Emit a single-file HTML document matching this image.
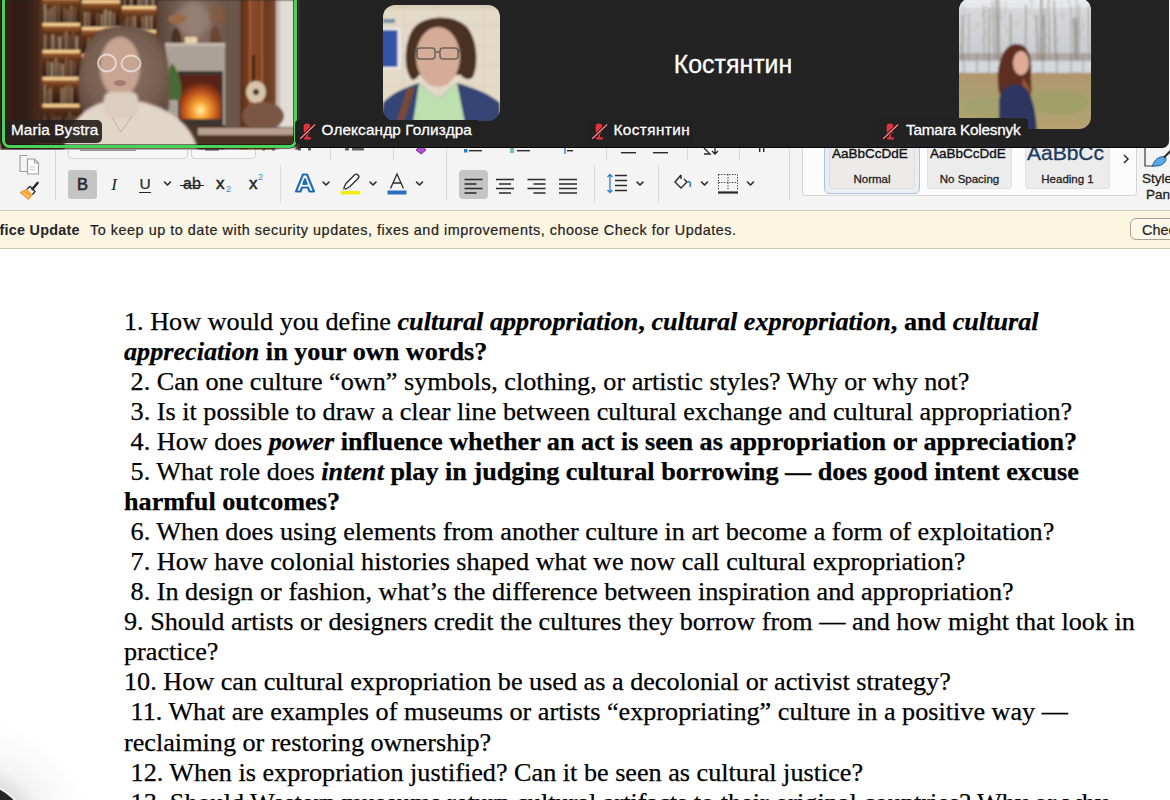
<!DOCTYPE html>
<html><head><meta charset="utf-8">
<style>
*{box-sizing:border-box}
html,body{margin:0;padding:0;width:1170px;height:800px;overflow:hidden;background:#fff;position:relative}
.abs{position:absolute}
#ribbon{left:0;top:0;width:1170px;height:211px;background:#f4f4f4;border-bottom:1.5px solid #cdcdcd}
#upd{left:0;top:211px;width:1170px;height:37.5px;background:#fcf5e2;border-bottom:1.3px solid #cfc9b8;font-family:"Liberation Sans",sans-serif;font-size:14.5px;color:#1e1e1e}
#doc{left:0;top:0;width:1170px;font-family:"Liberation Serif",serif;font-size:26.2px;color:#000;white-space:pre;-webkit-text-stroke:0.25px #000}
#doc div{position:absolute;left:124px;height:30px;line-height:30px}
#zoom{left:0;top:0;width:1169px;height:148px;background:#232323;border-radius:0 0 7px 7px;border-bottom:1.5px solid #050505}
.zl{position:absolute;top:120.1px;font-family:"Liberation Sans",sans-serif;font-size:15.3px;line-height:20px;color:#fff;white-space:nowrap;-webkit-text-stroke:.3px #fff}
.lbl{position:absolute;font-family:"Liberation Sans",sans-serif;font-size:14.5px;color:#fff;top:121px;height:21px;line-height:21px;padding:0 7px;background:rgba(20,20,20,0.75);border-radius:4px}
</style></head><body>
<div id="ribbon" class="abs">
<!-- copy icon -->
<svg class="abs" style="left:17px;top:153px" width="24" height="24" viewBox="0 0 24 24">
<path d="M10.5 2.5 H3 V18.5 H10" fill="none" stroke="#9c9c9c" stroke-width="1.1"/>
<path d="M10.5 6 H17.5 L21.5 10 V21 H10.5 Z" fill="#fafafa" stroke="#9c9c9c" stroke-width="1.1"/>
<path d="M17.5 6 V10 H21.5" fill="none" stroke="#9c9c9c" stroke-width="1"/>
<path d="M13 14 H18 M13 16.5 H18" stroke="#c0c0c0" stroke-width=".8"/>
</svg>
<!-- format painter -->
<svg class="abs" style="left:17px;top:180px" width="24" height="22" viewBox="0 0 24 22">
<path d="M3 12.5 L10 9 L15.5 14.5 L11.5 19.5 Z" fill="#f5a83a" stroke="#e08a20" stroke-width=".8"/>
<path d="M6 13 L12 17" stroke="#fde0b0" stroke-width="1"/>
<path d="M10 9 L13 6.5 L18 11.5 L15.5 14.5" fill="#fff" stroke="#2a2a2a" stroke-width="1.3"/>
<path d="M15.5 9 L20.5 3" stroke="#2a2a2a" stroke-width="2.6" stroke-linecap="round"/>
</svg>
<div class="abs" style="left:54.5px;top:150px;width:1px;height:50px;background:#d6d6d6"></div>
<!-- font/size boxes -->
<div class="abs" style="left:68px;top:130px;width:120px;height:29px;border:1px solid #d2d2d2;border-radius:4px;background:#f7f7f7"></div>
<div class="abs" style="left:191px;top:130px;width:65px;height:29px;border:1px solid #d2d2d2;border-radius:4px;background:#f7f7f7"></div>
<!-- row1 peeks -->
<svg class="abs" style="left:0;top:140px" width="800" height="24" viewBox="0 140 800 24">
<g fill="#2a2a2a">
<rect x="80" y="148.6" width="56" height="2.2" opacity=".6"/>
<rect x="205" y="148.6" width="14" height="2.2" opacity=".6"/>
<rect x="262" y="148" width="3" height="2.5" opacity=".7"/><rect x="272" y="148" width="3" height="2.5" opacity=".7"/>
<rect x="298" y="148" width="3" height="2.5" opacity=".7"/><rect x="308" y="148" width="3" height="2.5" opacity=".7"/>
<rect x="345" y="148" width="4" height="2.5" opacity=".7"/><rect x="352" y="148" width="12" height="2.5" opacity=".7"/>
</g>
<path d="M416 150 L421 145 L426 150 L421 154 Z" fill="#b050c8" stroke="#8a2aa8" stroke-width="1"/>
<g fill="#d8d8d8"><rect x="330" y="148" width="1" height="12"/><rect x="393" y="148" width="1" height="12"/><rect x="606" y="148" width="1" height="12"/><rect x="687" y="148" width="1" height="12"/><rect x="739" y="148" width="1" height="12"/></g>
<rect x="464" y="149" width="3.5" height="3.5" fill="#2a7fd0"/>
<rect x="469" y="150" width="13" height="1.4" fill="#2a2a2a"/>
<rect x="510" y="148" width="4" height="5" fill="#2a9a9a" opacity=".6"/>
<rect x="517" y="150" width="13" height="1.4" fill="#2a2a2a"/>
<rect x="564" y="148" width="2" height="6" fill="#2a7fd0" opacity=".7"/>
<rect x="567" y="150" width="6" height="1.4" fill="#2a2a2a"/>
<rect x="621" y="152" width="15" height="1.4" fill="#2a2a2a"/>
<rect x="653" y="152" width="15" height="1.4" fill="#2a2a2a"/>
<path d="M704 148 L710 154 H704 M715 147 V154 M712 151 L715 154 L718 151" fill="none" stroke="#2a2a2a" stroke-width="1.3"/>
<rect x="759" y="148" width="1.4" height="4" fill="#2a2a2a"/><rect x="763" y="148" width="1.4" height="4" fill="#2a2a2a"/>
</svg>
<!-- B button -->
<div class="abs" style="left:68px;top:169.5px;width:29px;height:29px;background:#c5c5c5;border-radius:3px"></div>
<div class="abs" style="left:68px;top:169.5px;width:29px;height:29px;font:16.5px/29px 'Liberation Sans',sans-serif;text-align:center;color:#2a2a2a;-webkit-text-stroke:.6px #2a2a2a">B</div>
<div class="abs" style="left:104px;top:169.5px;width:20px;height:29px;font:italic 17px/29px 'Liberation Serif',serif;text-align:center;color:#262626">I</div>
<div class="abs" style="left:135px;top:169px;width:20px;height:29px;font:15.5px/29px 'Liberation Sans',sans-serif;text-align:center;color:#262626;-webkit-text-stroke:.2px #262626">U</div>
<div class="abs" style="left:139px;top:192px;width:12px;height:1.4px;background:#262626"></div>
<div class="abs" style="left:177px;top:169px;width:30px;height:29px;font:16px/29px 'Liberation Sans',sans-serif;text-align:center;color:#262626;-webkit-text-stroke:.3px #262626">ab</div>
<div class="abs" style="left:180px;top:184.5px;width:24px;height:1.3px;background:#262626"></div>
<div class="abs" style="left:216px;top:169px;width:20px;height:29px;font:17px/29px 'Liberation Sans',sans-serif;color:#262626;-webkit-text-stroke:.5px #262626">x</div>
<div class="abs" style="left:226px;top:184px;font:9px/10px 'Liberation Sans',sans-serif;color:#3b8ad6">2</div>
<div class="abs" style="left:249px;top:169px;width:20px;height:29px;font:17px/29px 'Liberation Sans',sans-serif;color:#262626;-webkit-text-stroke:.5px #262626">x</div>
<div class="abs" style="left:258px;top:172px;font:9px/10px 'Liberation Sans',sans-serif;color:#3b8ad6">2</div>
<div class="abs" style="left:279.5px;top:165px;width:1px;height:38px;background:#dadada"></div>
<!-- text effects A -->
<svg class="abs" style="left:294px;top:173px" width="22" height="22" viewBox="0 0 22 22">
<path d="M2 18.5 L9 1.5 H13 L20 18.5 H15.5 L14 14.5 H8 L6.5 18.5 Z M9.3 11 H12.7 L11 6.2 Z" fill="#ffffff" stroke="#2a78c8" stroke-width="2.2" stroke-linejoin="round" fill-rule="evenodd"/>
<path d="M2 18.5 L9 1.5 H13 L20 18.5 H15.5 L14 14.5 H8 L6.5 18.5 Z M9.3 11 H12.7 L11 6.2 Z" fill="none" stroke="#1a4a80" stroke-width=".5" fill-rule="evenodd"/>
</svg>
<!-- highlighter -->
<svg class="abs" style="left:339px;top:172px" width="24" height="24" viewBox="0 0 24 24">
<path d="M5 15.5 L7 11.5 L15.5 3 C16.5 2 18 2 19 3 C20 4 20 5.5 19 6.5 L10.5 15 L6.5 17 Z" fill="#fff" stroke="#2a2a2a" stroke-width="1.3"/>
<path d="M5 15.5 L6.5 17 L3 18 Z" fill="#777"/>
<rect x="1.5" y="19" width="20" height="3.5" rx="1" fill="#f2ea10"/>
</svg>
<!-- font color A -->
<svg class="abs" style="left:386px;top:172px" width="22" height="24" viewBox="0 0 22 24">
<path d="M4.5 16.5 L11 2 L17.5 16.5 M7 11 H15" fill="none" stroke="#2a2a2a" stroke-width="1.3"/>
<rect x="1.5" y="18.5" width="19" height="4" fill="#2e6cc0"/>
</svg>
<div class="abs" style="left:445.5px;top:149px;width:1px;height:51px;background:#d6d6d6"></div>
<!-- align -->
<div class="abs" style="left:459px;top:169.5px;width:29px;height:29px;background:#c5c5c5;border-radius:4px"></div>
<svg class="abs" style="left:459px;top:169.5px" width="140" height="29" viewBox="0 0 140 29">
<g stroke="#2a2a2a" stroke-width="1.6">
<path d="M5.5 9.5 H23.5 M5.5 14 H17.5 M5.5 18.5 H23.5 M5.5 23 H17.5"/>
<path d="M37 9.5 H55 M40 14 H52 M37 18.5 H55 M40 23 H52"/>
<path d="M68.5 9.5 H86.5 M74.5 14 H86.5 M68.5 18.5 H86.5 M74.5 23 H86.5"/>
<path d="M100 9.5 H118 M100 14 H118 M100 18.5 H118 M100 23 H118"/>
</g>
</svg>
<div class="abs" style="left:593.5px;top:165px;width:1px;height:38px;background:#dadada"></div>
<!-- line spacing -->
<svg class="abs" style="left:606px;top:172px" width="24" height="24" viewBox="0 0 24 24">
<g stroke="#2a7fd0" stroke-width="1.3" fill="none"><path d="M4 2.5 V20.5 M1.5 5 L4 2.5 L6.5 5 M1.5 18 L4 20.5 L6.5 18"/></g>
<g stroke="#2a2a2a" stroke-width="1.6"><path d="M9 3.5 H21 M9 8.5 H21 M9 13.5 H21 M9 18.5 H21"/></g>
</svg>
<div class="abs" style="left:657.5px;top:165px;width:1px;height:38px;background:#dadada"></div>
<!-- shading -->
<svg class="abs" style="left:672px;top:172px" width="22" height="22" viewBox="0 0 22 22">
<path d="M9 3 L3 10 L9 16 L15 10 L12 7 M9 3 V7" fill="none" stroke="#2a2a2a" stroke-width="1.4"/>
<path d="M15.5 10 C17 9 18.5 10 18.5 12 L18 15" fill="none" stroke="#2a7fd0" stroke-width="1.6"/>
</svg>
<!-- borders -->
<svg class="abs" style="left:717px;top:173px" width="22" height="22" viewBox="0 0 22 22">
<g stroke="#2a2a2a" stroke-width="1" stroke-dasharray="1.2 1.5" fill="none"><path d="M1.5 1.5 H20.5 M1.5 1.5 V17 M20.5 1.5 V17 M11 1.5 V17 M1.5 9.5 H20.5"/></g>
<path d="M1 19.5 H21" stroke="#2a2a2a" stroke-width="2.2"/>
</svg>
<div class="abs" style="left:788.5px;top:149px;width:1px;height:51px;background:#d6d6d6"></div>
<!-- chevrons -->
<svg class="abs" style="left:0;top:0" width="800" height="210" viewBox="0 0 800 210">
<g fill="none" stroke="#2a2a2a" stroke-width="1.6" stroke-linecap="round" stroke-linejoin="round">
<path d="M164.5 182 L167.5 185 L170.5 182"/>
<path d="M323 182 L326 185 L329 182"/>
<path d="M370 182 L373 185 L376 182"/>
<path d="M416.5 182 L419.5 185 L422.5 182"/>
<path d="M637 182 L640 185 L643 182"/>
<path d="M701.5 182 L704.5 185 L707.5 182"/>
<path d="M747.5 182 L750.5 185 L753.5 182"/>
</g>
</svg>
<!-- styles gallery -->
<div class="abs" style="left:802px;top:120px;width:335px;height:76px;background:#fcfcfc;border:1px solid #d4d4d4;border-radius:4px"></div>
<div class="abs" style="left:824px;top:118px;width:96px;height:75.5px;border:1.5px solid #a9c2df;border-radius:5px;background:#e9eef5"></div>
<div class="abs" style="left:828.5px;top:120px;width:86.5px;height:69px;background:linear-gradient(#ececec,#eceae8);border:1px solid #dddddd;border-radius:3px"></div>
<div class="abs" style="left:927px;top:120px;width:85px;height:69px;background:#ececec;border:1px solid #e0e0e0;border-radius:3px"></div>
<div class="abs" style="left:1024.5px;top:120px;width:85px;height:69px;background:#ececec;border:1px solid #e0e0e0;border-radius:3px"></div>
<div class="abs" style="left:832px;top:144.5px;width:82px;overflow:hidden;font:13.5px/18px 'Liberation Sans',sans-serif;color:#111;white-space:nowrap;-webkit-text-stroke:.35px #111">AaBbCcDdE</div>
<div class="abs" style="left:930px;top:144.5px;width:81px;overflow:hidden;font:13.5px/18px 'Liberation Sans',sans-serif;color:#111;white-space:nowrap;-webkit-text-stroke:.35px #111">AaBbCcDdE</div>
<div class="abs" style="left:1027px;top:141px;width:79px;overflow:hidden;font:21px/24px 'Liberation Sans',sans-serif;color:#1c3a5c;white-space:nowrap;-webkit-text-stroke:.3px #1c3a5c">AaBbCc</div>
<div class="abs" style="left:828px;top:171.5px;width:88px;text-align:center;font:11.5px/14px 'Liberation Sans',sans-serif;color:#1e1e1e;-webkit-text-stroke:.3px #1e1e1e">Normal</div>
<div class="abs" style="left:927px;top:171.5px;width:85px;text-align:center;font:11.5px/14px 'Liberation Sans',sans-serif;color:#1e1e1e;-webkit-text-stroke:.3px #1e1e1e">No Spacing</div>
<div class="abs" style="left:1025px;top:171.5px;width:85px;text-align:center;font:11.5px/14px 'Liberation Sans',sans-serif;color:#1e1e1e;-webkit-text-stroke:.3px #1e1e1e">Heading 1</div>
<svg class="abs" style="left:1120px;top:152px" width="12" height="14" viewBox="0 0 12 14"><path d="M4 3 L8 7 L4 11" fill="none" stroke="#2a2a2a" stroke-width="1.5"/></svg>
<!-- styles pane -->
<svg class="abs" style="left:1143px;top:140px" width="27" height="28" viewBox="0 0 27 28">
<path d="M2 8 V26 H11" fill="none" stroke="#3a3a3a" stroke-width="1.2"/>
<path d="M9.5 26 C11 20 16 15.5 22.5 17 C24.5 21.5 19.5 27 9.5 26 Z" fill="#5aa8e8" stroke="#1a5a9a" stroke-width="1"/>
<path d="M21 17.5 L28 10.5" stroke="#2a2a2a" stroke-width="2"/>
</svg>
<div class="abs" style="left:1142px;top:171px;font:13.5px/15px 'Liberation Sans',sans-serif;color:#1e1e1e;-webkit-text-stroke:.3px #1e1e1e">Style</div>
<div class="abs" style="left:1146px;top:187px;font:13.5px/15px 'Liberation Sans',sans-serif;color:#1e1e1e;-webkit-text-stroke:.3px #1e1e1e">Pane</div>
</div>
<div id="upd" class="abs">
<div class="abs" style="left:-17px;top:10.2px;font-weight:bold;font-size:14.4px;line-height:18px;letter-spacing:.25px;white-space:nowrap;color:#262626">Office Update</div>
<div class="abs" style="left:90px;top:10.2px;font-size:14.4px;line-height:18px;letter-spacing:.53px;-webkit-text-stroke:.2px #1e1e1e;white-space:nowrap">To keep up to date with security updates, fixes and improvements, choose Check for Updates.</div>
<div class="abs" style="left:1130px;top:6.8px;width:60px;height:22px;border:1.2px solid #a8a290;border-radius:6px;background:#fdf8ea"></div>
<div class="abs" style="left:1142px;top:10.2px;-webkit-text-stroke:.2px #1e1e1e;font-size:14.4px;line-height:18px;white-space:nowrap">Check</div>
</div>

<div id="doc" class="abs">
<div style="top:306.80px">1. How would you define <b><i>cultural appropriation</i>, <i>cultural expropriation</i>, and <i>cultural</i></b></div>
<div style="top:336.85px"><b><i>appreciation</i> in your own words?</b></div>
<div style="top:366.90px"> 2. Can one culture “own” symbols, clothing, or artistic styles? Why or why not?</div>
<div style="top:396.95px"> 3. Is it possible to draw a clear line between cultural exchange and cultural appropriation?</div>
<div style="top:427.00px"> 4. How does <b><i>power</i> influence whether an act is seen as appropriation or appreciation?</b></div>
<div style="top:457.05px"> 5. What role does <b><i>intent</i> play in judging cultural borrowing — does good intent excuse</b></div>
<div style="top:487.10px"><b>harmful outcomes?</b></div>
<div style="top:517.15px"> 6. When does using elements from another culture in art become a form of exploitation?</div>
<div style="top:547.20px"> 7. How have colonial histories shaped what we now call cultural expropriation?</div>
<div style="top:577.25px"> 8. In design or fashion, what’s the difference between inspiration and appropriation?</div>
<div style="top:607.30px">9. Should artists or designers credit the cultures they borrow from — and how might that look in</div>
<div style="top:637.35px">practice?</div>
<div style="top:667.40px">10. How can cultural expropriation be used as a decolonial or activist strategy?</div>
<div style="top:697.45px"> 11. What are examples of museums or artists “expropriating” culture in a positive way —</div>
<div style="top:727.50px">reclaiming or restoring ownership?</div>
<div style="top:757.55px"> 12. When is expropriation justified? Can it be seen as cultural justice?</div>
<div style="top:787.60px"> 13. Should Western museums return cultural artifacts to their original countries? Why or why</div>
</div>
<svg class="abs" style="left:0;top:700px" width="120" height="100" viewBox="0 700 120 100">
<defs><radialGradient id="sh" cx="-20" cy="830" r="110" gradientUnits="userSpaceOnUse"><stop offset=".4" stop-color="#000" stop-opacity=".14"/><stop offset=".6" stop-color="#000" stop-opacity=".04"/><stop offset="1" stop-color="#000" stop-opacity="0"/></radialGradient></defs>
<circle cx="-20" cy="830" r="110" fill="url(#sh)"/>
<circle cx="-20" cy="830" r="47" fill="#f2f2f2"/>
<circle cx="-20" cy="830" r="45" fill="#262626"/>
</svg>
<div id="zoom" class="abs">
<!-- Maria tile -->
<svg class="abs" style="left:0;top:0" width="300" height="150" viewBox="0 0 300 150">
<defs>
<filter id="bl1" x="-10%" y="-10%" width="120%" height="120%"><feGaussianBlur stdDeviation="0.9"/></filter>
<filter id="bl2" x="-20%" y="-20%" width="140%" height="140%"><feGaussianBlur stdDeviation="1.6"/></filter>
<filter id="bl5" x="-50%" y="-50%" width="200%" height="200%"><feGaussianBlur stdDeviation="2.5"/></filter>
<linearGradient id="wallL" x1="0" x2="1"><stop offset="0" stop-color="#3e2519"/><stop offset=".5" stop-color="#2e1a12"/><stop offset="1" stop-color="#4a2c1e"/></linearGradient>
<linearGradient id="curt" x1="0" x2="1"><stop offset="0" stop-color="#5e4438"/><stop offset=".3" stop-color="#5a2e1a"/><stop offset=".55" stop-color="#8a4a2a"/><stop offset=".8" stop-color="#6a3a22"/><stop offset="1" stop-color="#7a4a30"/></linearGradient>
<linearGradient id="mwall" x1="0" y1="0" x2="1" y2="0"><stop offset="0" stop-color="#5a4438"/><stop offset=".5" stop-color="#8a7468"/><stop offset="1" stop-color="#6a5448"/></linearGradient>
<radialGradient id="fire" cx=".5" cy=".8" r=".65"><stop offset="0" stop-color="#fff4b0"/><stop offset=".3" stop-color="#f8a030"/><stop offset=".7" stop-color="#b0481a"/><stop offset="1" stop-color="#5a2414"/></radialGradient>
<radialGradient id="hair" cx=".5" cy=".5" r=".6"><stop offset="0" stop-color="#8e7466"/><stop offset=".7" stop-color="#765e50"/><stop offset="1" stop-color="#5e483c"/></radialGradient>
<linearGradient id="cellg" x1="0" y1="0" x2="0" y2="1"><stop offset="0" stop-color="#c87a3a"/><stop offset=".35" stop-color="#5e3219"/><stop offset="1" stop-color="#2a1810"/></linearGradient>
<linearGradient id="shelfglow" x1="0" y1="0" x2="0" y2="1"><stop offset="0" stop-color="#f8c888"/><stop offset=".5" stop-color="#d88a48"/><stop offset="1" stop-color="#6a3a20"/></linearGradient>
</defs>
<g filter="url(#bl1)">
<rect x="0" y="0" width="300" height="150" fill="#4a2e20"/>
<rect x="0" y="0" width="42" height="150" fill="url(#wallL)"/>
<!-- bookshelf -->
<rect x="40" y="0" width="120" height="128" fill="#2e1a10"/>
<rect x="42" y="-4" width="38" height="27" fill="url(#cellg)"/>
<rect x="44.0" y="4.3" width="2" height="18.7" fill="#d8c4a8" opacity=".6"/>
<rect x="47.1" y="9.4" width="2.5" height="13.6" fill="#b09070" opacity=".6"/>
<rect x="50.8" y="7.4" width="1.5" height="15.6" fill="#d8c4a8" opacity=".6"/>
<rect x="54.0" y="5.0" width="1.5" height="18.0" fill="#c8b090" opacity=".6"/>
<rect x="57.3" y="4.3" width="2.5" height="18.7" fill="#8a6a50" opacity=".6"/>
<rect x="63.7" y="6.8" width="1.5" height="16.2" fill="#b09070" opacity=".6"/>
<rect x="67.1" y="9.4" width="1.5" height="13.6" fill="#c8b090" opacity=".6"/>
<rect x="70.1" y="5.7" width="2.5" height="17.3" fill="#b09070" opacity=".6"/>
<rect x="73.8" y="6.8" width="2.5" height="16.2" fill="#8a6a50" opacity=".6"/>
<rect x="42" y="-4.0" width="38" height="3" fill="#f8d092"/>
<rect x="42" y="23" width="38" height="27" fill="url(#cellg)"/>
<rect x="44.0" y="34.8" width="2" height="15.2" fill="#c8b090" opacity=".6"/>
<rect x="47.8" y="36.5" width="1.5" height="13.5" fill="#8a6a50" opacity=".6"/>
<rect x="51.4" y="34.3" width="2.5" height="15.7" fill="#d8c4a8" opacity=".6"/>
<rect x="55.0" y="36.0" width="2" height="14.0" fill="#8a6a50" opacity=".6"/>
<rect x="58.5" y="36.5" width="2.5" height="13.5" fill="#e0d0b8" opacity=".6"/>
<rect x="62.4" y="33.4" width="2" height="16.6" fill="#8a6a50" opacity=".6"/>
<rect x="65.5" y="31.3" width="1.5" height="18.7" fill="#d8c4a8" opacity=".6"/>
<rect x="68.1" y="35.1" width="2.5" height="14.9" fill="#8a6a50" opacity=".6"/>
<rect x="71.9" y="31.7" width="2" height="18.3" fill="#8a6a50" opacity=".6"/>
<rect x="75.4" y="36.3" width="2.5" height="13.7" fill="#e0d0b8" opacity=".6"/>
<rect x="42" y="23.0" width="38" height="3" fill="#f8d092"/>
<rect x="42" y="50" width="38" height="27" fill="url(#cellg)"/>
<rect x="47.1" y="61.3" width="1.5" height="15.7" fill="#c8b090" opacity=".6"/>
<rect x="50.6" y="62.3" width="2.5" height="14.7" fill="#e0d0b8" opacity=".6"/>
<rect x="54.9" y="58.3" width="2" height="18.7" fill="#c8b090" opacity=".6"/>
<rect x="58.1" y="62.6" width="2.5" height="14.4" fill="#b09070" opacity=".6"/>
<rect x="61.8" y="64.0" width="2" height="13.0" fill="#e0d0b8" opacity=".6"/>
<rect x="65.5" y="58.3" width="2" height="18.7" fill="#b09070" opacity=".6"/>
<rect x="69.7" y="59.9" width="2.5" height="17.1" fill="#b09070" opacity=".6"/>
<rect x="73.6" y="61.6" width="2" height="15.4" fill="#8a6a50" opacity=".6"/>
<rect x="42" y="50.0" width="38" height="3" fill="#f8d092"/>
<rect x="42" y="77" width="38" height="27" fill="url(#cellg)"/>
<rect x="44.0" y="85.1" width="1.5" height="18.9" fill="#d8c4a8" opacity=".6"/>
<rect x="46.9" y="90.4" width="1.5" height="13.6" fill="#b09070" opacity=".6"/>
<rect x="49.5" y="87.3" width="2" height="16.7" fill="#c8b090" opacity=".6"/>
<rect x="60.7" y="88.1" width="2" height="15.9" fill="#c8b090" opacity=".6"/>
<rect x="63.8" y="86.6" width="2" height="17.4" fill="#c8b090" opacity=".6"/>
<rect x="67.4" y="85.3" width="1.5" height="18.7" fill="#c8b090" opacity=".6"/>
<rect x="70.8" y="86.5" width="1.5" height="17.5" fill="#d8c4a8" opacity=".6"/>
<rect x="42" y="77.0" width="38" height="3" fill="#f8d092"/>
<rect x="42" y="104" width="38" height="27" fill="url(#cellg)"/>
<rect x="44.0" y="114.8" width="1.5" height="16.2" fill="#e0d0b8" opacity=".6"/>
<rect x="51.8" y="113.1" width="1.5" height="17.9" fill="#c8b090" opacity=".6"/>
<rect x="54.5" y="115.9" width="2" height="15.1" fill="#d8c4a8" opacity=".6"/>
<rect x="58.5" y="116.4" width="2" height="14.6" fill="#e0d0b8" opacity=".6"/>
<rect x="65.9" y="117.4" width="1.5" height="13.6" fill="#e0d0b8" opacity=".6"/>
<rect x="68.7" y="112.1" width="2.5" height="18.9" fill="#d8c4a8" opacity=".6"/>
<rect x="72.8" y="115.9" width="2.5" height="15.1" fill="#d8c4a8" opacity=".6"/>
<rect x="42" y="104.0" width="38" height="3" fill="#f8d092"/>
<rect x="82" y="-8" width="38" height="27" fill="url(#cellg)"/>
<rect x="84.0" y="1.5" width="2.5" height="17.5" fill="#c8b090" opacity=".6"/>
<rect x="92.7" y="3.2" width="2" height="15.8" fill="#d8c4a8" opacity=".6"/>
<rect x="96.6" y="0.0" width="1.5" height="19.0" fill="#b09070" opacity=".6"/>
<rect x="104.8" y="0.4" width="2.5" height="18.6" fill="#b09070" opacity=".6"/>
<rect x="108.5" y="1.2" width="1.5" height="17.8" fill="#d8c4a8" opacity=".6"/>
<rect x="115.1" y="5.8" width="1.5" height="13.2" fill="#b09070" opacity=".6"/>
<rect x="82" y="-8.0" width="38" height="3" fill="#f8d092"/>
<rect x="82" y="0" width="38" height="27" fill="url(#cellg)"/>
<rect x="84.0" y="12.0" width="2.5" height="15.0" fill="#c8b090" opacity=".6"/>
<rect x="87.6" y="11.9" width="2.5" height="15.1" fill="#b09070" opacity=".6"/>
<rect x="96.2" y="13.1" width="2.5" height="13.9" fill="#8a6a50" opacity=".6"/>
<rect x="100.6" y="14.0" width="2.5" height="13.0" fill="#c8b090" opacity=".6"/>
<rect x="104.3" y="9.6" width="2.5" height="17.4" fill="#e0d0b8" opacity=".6"/>
<rect x="108.6" y="10.7" width="2.5" height="16.3" fill="#d8c4a8" opacity=".6"/>
<rect x="113.1" y="12.5" width="1.5" height="14.5" fill="#d8c4a8" opacity=".6"/>
<rect x="82" y="0.0" width="38" height="3" fill="#f8d092"/>
<rect x="82" y="27" width="38" height="27" fill="url(#cellg)"/>
<rect x="87.6" y="37.3" width="2" height="16.7" fill="#b09070" opacity=".6"/>
<rect x="90.8" y="38.3" width="2" height="15.7" fill="#8a6a50" opacity=".6"/>
<rect x="101.3" y="40.2" width="2" height="13.8" fill="#8a6a50" opacity=".6"/>
<rect x="104.7" y="39.6" width="2.5" height="14.4" fill="#e0d0b8" opacity=".6"/>
<rect x="109.1" y="35.4" width="1.5" height="18.6" fill="#e0d0b8" opacity=".6"/>
<rect x="111.8" y="35.2" width="1.5" height="18.8" fill="#d8c4a8" opacity=".6"/>
<rect x="114.8" y="40.0" width="2" height="14.0" fill="#c8b090" opacity=".6"/>
<rect x="82" y="27.0" width="38" height="3" fill="#f8d092"/>
<rect x="82" y="54" width="38" height="27" fill="url(#cellg)"/>
<rect x="84.0" y="62.0" width="2" height="19.0" fill="#8a6a50" opacity=".6"/>
<rect x="87.2" y="67.4" width="2" height="13.6" fill="#e0d0b8" opacity=".6"/>
<rect x="90.9" y="63.8" width="2" height="17.2" fill="#b09070" opacity=".6"/>
<rect x="94.6" y="62.2" width="2.5" height="18.8" fill="#c8b090" opacity=".6"/>
<rect x="99.3" y="67.5" width="1.5" height="13.5" fill="#c8b090" opacity=".6"/>
<rect x="105.5" y="65.6" width="2" height="15.4" fill="#b09070" opacity=".6"/>
<rect x="109.1" y="66.0" width="2.5" height="15.0" fill="#c8b090" opacity=".6"/>
<rect x="113.1" y="66.4" width="1.5" height="14.6" fill="#d8c4a8" opacity=".6"/>
<rect x="82" y="54.0" width="38" height="3" fill="#f8d092"/>
<rect x="82" y="81" width="38" height="27" fill="url(#cellg)"/>
<rect x="84.0" y="91.4" width="1.5" height="16.6" fill="#e0d0b8" opacity=".6"/>
<rect x="91.0" y="91.3" width="2" height="16.7" fill="#c8b090" opacity=".6"/>
<rect x="95.2" y="93.4" width="1.5" height="14.6" fill="#e0d0b8" opacity=".6"/>
<rect x="98.4" y="90.4" width="2.5" height="17.6" fill="#b09070" opacity=".6"/>
<rect x="102.7" y="92.9" width="2" height="15.1" fill="#e0d0b8" opacity=".6"/>
<rect x="105.8" y="90.6" width="1.5" height="17.4" fill="#c8b090" opacity=".6"/>
<rect x="108.9" y="89.4" width="1.5" height="18.6" fill="#8a6a50" opacity=".6"/>
<rect x="112.2" y="90.0" width="2.5" height="18.0" fill="#b09070" opacity=".6"/>
<rect x="82" y="81.0" width="38" height="3" fill="#f8d092"/>
<rect x="122" y="-20" width="34" height="27" fill="url(#cellg)"/>
<rect x="124.0" y="-11.9" width="1.5" height="18.9" fill="#c8b090" opacity=".6"/>
<rect x="130.0" y="-10.4" width="2.5" height="17.4" fill="#c8b090" opacity=".6"/>
<rect x="137.9" y="-9.6" width="2" height="16.6" fill="#d8c4a8" opacity=".6"/>
<rect x="141.4" y="-7.6" width="1.5" height="14.6" fill="#e0d0b8" opacity=".6"/>
<rect x="145.1" y="-7.9" width="2.5" height="14.9" fill="#e0d0b8" opacity=".6"/>
<rect x="148.8" y="-6.0" width="1.5" height="13.0" fill="#8a6a50" opacity=".6"/>
<rect x="151.7" y="-7.2" width="2.5" height="14.2" fill="#d8c4a8" opacity=".6"/>
<rect x="122" y="-20.0" width="34" height="3" fill="#f8d092"/>
<rect x="122" y="6" width="34" height="27" fill="url(#cellg)"/>
<rect x="124.0" y="19.1" width="1.5" height="13.9" fill="#8a6a50" opacity=".6"/>
<rect x="126.5" y="16.2" width="2" height="16.8" fill="#b09070" opacity=".6"/>
<rect x="130.6" y="16.1" width="1.5" height="16.9" fill="#b09070" opacity=".6"/>
<rect x="133.5" y="15.7" width="2" height="17.3" fill="#e0d0b8" opacity=".6"/>
<rect x="141.7" y="16.2" width="2.5" height="16.8" fill="#b09070" opacity=".6"/>
<rect x="145.4" y="15.5" width="2.5" height="17.5" fill="#d8c4a8" opacity=".6"/>
<rect x="149.9" y="15.2" width="2.5" height="17.8" fill="#c8b090" opacity=".6"/>
<rect x="122" y="6.0" width="34" height="3" fill="#f8d092"/>
<rect x="122" y="30" width="34" height="27" fill="url(#cellg)"/>
<rect x="124.0" y="43.2" width="1.5" height="13.8" fill="#d8c4a8" opacity=".6"/>
<rect x="127.0" y="40.6" width="2" height="16.4" fill="#b09070" opacity=".6"/>
<rect x="130.8" y="42.4" width="2" height="14.6" fill="#d8c4a8" opacity=".6"/>
<rect x="134.7" y="38.6" width="2.5" height="18.4" fill="#b09070" opacity=".6"/>
<rect x="142.8" y="39.6" width="1.5" height="17.4" fill="#8a6a50" opacity=".6"/>
<rect x="149.2" y="40.3" width="1.5" height="16.7" fill="#d8c4a8" opacity=".6"/>
<rect x="122" y="30.0" width="34" height="3" fill="#f8d092"/>
<rect x="122" y="56" width="34" height="27" fill="url(#cellg)"/>
<rect x="124.0" y="68.5" width="2" height="14.5" fill="#e0d0b8" opacity=".6"/>
<rect x="127.7" y="69.9" width="1.5" height="13.1" fill="#e0d0b8" opacity=".6"/>
<rect x="131.4" y="65.8" width="1.5" height="17.2" fill="#e0d0b8" opacity=".6"/>
<rect x="134.8" y="67.2" width="2" height="15.8" fill="#d8c4a8" opacity=".6"/>
<rect x="143.6" y="68.3" width="1.5" height="14.7" fill="#b09070" opacity=".6"/>
<rect x="147.2" y="64.0" width="2" height="19.0" fill="#c8b090" opacity=".6"/>
<rect x="150.3" y="69.1" width="1.5" height="13.9" fill="#e0d0b8" opacity=".6"/>
<rect x="122" y="56.0" width="34" height="3" fill="#f8d092"/>
<rect x="122" y="82" width="34" height="27" fill="url(#cellg)"/>
<rect x="131.3" y="96.0" width="1.5" height="13.0" fill="#8a6a50" opacity=".6"/>
<rect x="134.3" y="95.2" width="2.5" height="13.8" fill="#e0d0b8" opacity=".6"/>
<rect x="137.9" y="96.0" width="2" height="13.0" fill="#8a6a50" opacity=".6"/>
<rect x="143.9" y="95.6" width="2" height="13.4" fill="#b09070" opacity=".6"/>
<rect x="150.4" y="91.0" width="1.5" height="18.0" fill="#c8b090" opacity=".6"/>
<rect x="122" y="82.0" width="34" height="3" fill="#f8d092"/>
<g fill="#5a3420"><rect x="40" y="0" width="2.5" height="128"/><rect x="80" y="0" width="2" height="128"/><rect x="120" y="0" width="2" height="128"/><rect x="156" y="0" width="3" height="128"/></g>
<rect x="40" y="108" width="120" height="20" fill="#3a2216" opacity=".6"/>
<!-- wall behind mantel -->
<rect x="158" y="0" width="70" height="48" fill="url(#mwall)"/>
<ellipse cx="193" cy="20" rx="18" ry="16" fill="#a08a7a" opacity=".6" filter="url(#bl5)"/>
<ellipse cx="177" cy="19" rx="9" ry="5" fill="#9a6a48"/>
<ellipse cx="219" cy="15" rx="10" ry="9" fill="#8a5a3a" opacity=".6"/>
<path d="M171 44 L172 32 L176 27 L180 32 L182 44 Z" fill="#4a3024"/>
<path d="M210 47 L211 31 L215 25 L219 31 L223 47 Z" fill="#6a4430"/>
<rect x="185" y="37" width="12" height="8" fill="#f4dcb0" opacity=".9"/>
<!-- fireplace -->
<rect x="165" y="43" width="68" height="82" fill="#aca196"/>
<rect x="165" y="43" width="68" height="3" fill="#c4b8ae"/>
<rect x="178" y="71" width="45" height="54" fill="#3a3430"/>
<rect x="180" y="75" width="41" height="44" fill="url(#fire)"/>
<!-- plant -->
<path d="M168 100 C164 85 166 70 172 63 C178 70 184 85 180 100 Z" fill="#4a6a34"/>
<!-- curtains -->
<rect x="225" y="0" width="52" height="150" fill="url(#curt)"/>
<rect x="225" y="0" width="15" height="150" fill="#6e5a4e"/>
<g stroke="#5a483e" stroke-width="1" opacity=".7"><path d="M228 0 V150 M232 0 V150 M236 0 V150"/></g>
<g stroke="#c0703a" stroke-width="2" opacity=".6"><path d="M250 0 V150 M262 0 V150"/></g>
<rect x="276" y="0" width="19" height="150" fill="#e2dcd6"/>
<rect x="276" y="0" width="4" height="150" fill="#c8bcb2"/>
<!-- guitar + pouf -->
<rect x="252" y="55" width="3" height="28" fill="#3a2418"/>
<ellipse cx="256" cy="92" rx="10" ry="11" fill="#d8c4a8"/>
<circle cx="256" cy="92" r="3" fill="#3a2a20"/>
<ellipse cx="263" cy="116" rx="21" ry="14" fill="#7a5644"/>
<!-- table -->
<rect x="197" y="127" width="98" height="20" fill="#4a3024"/>
<rect x="197" y="128" width="98" height="7" fill="#b8a090"/>
<rect x="158" y="125" width="40" height="22" fill="#4a342a"/>
</g>
<!-- person -->
<g filter="url(#bl2)">
<path d="M84 116 C72 90 80 40 102 30 C118 22 150 24 162 44 C172 62 170 95 168 116 L150 120 L100 120 Z" fill="url(#hair)"/>
<ellipse cx="120" cy="67" rx="20" ry="30" fill="#c8a492"/>
<path d="M64 150 C66 124 84 108 104 102 L142 102 C166 108 192 122 198 150 Z" fill="#e2d6c8"/>
<rect x="104" y="92" width="34" height="26" rx="7" fill="#ddcdbf"/>
</g>
<g fill="none" stroke="#efe2e0" stroke-width="1.8" opacity=".85">
<ellipse cx="107" cy="63" rx="9" ry="8.5"/>
<ellipse cx="131" cy="63.5" rx="9.5" ry="8"/>
</g>
<ellipse cx="120" cy="83" rx="6" ry="3" fill="#9a6a62" opacity=".7"/>
<path d="M112 118 L121 132 L132 116" fill="none" stroke="#b0a090" stroke-width="1" opacity=".7"/>
<!-- green border -->
<rect x="3.5" y="-4" width="292" height="150.5" fill="none" stroke="#0a0a0a" stroke-width="4.2" rx="6"/>
<rect x="3.5" y="-4" width="292" height="150.5" fill="none" stroke="#49d35a" stroke-width="3" rx="6"/>
</svg>

<div class="lbl" style="left:6px;top:120px;width:96px;height:23px;background:rgba(40,34,32,.92);border-radius:5px;padding:0;"><span style="position:absolute;left:5px;top:0.1px;font-size:15.3px;line-height:20px;letter-spacing:.13px;white-space:nowrap;-webkit-text-stroke:.3px #fff">Maria Bystra</span></div>

<!-- Olexandr -->
<svg class="abs" style="left:383px;top:5px" width="117" height="116" viewBox="0 0 117 116">
<defs>
<clipPath id="clipO"><rect x="0" y="0" width="117" height="116" rx="12"/></clipPath>
<filter id="bl3" x="-10%" y="-10%" width="120%" height="120%"><feGaussianBlur stdDeviation="1.3"/></filter>
</defs>
<g clip-path="url(#clipO)"><g filter="url(#bl3)">
<rect x="-5" y="-5" width="130" height="130" fill="#e4dac8"/>
<rect x="-5" y="-5" width="130" height="9" fill="#d8cdb8"/>
<g stroke="#d2c6b2" stroke-width=".8" opacity=".7"><path d="M0 20 H117 M0 40 H117 M0 60 H117 M0 80 H117 M20 0 V116 M55 0 V116 M100 0 V116"/></g>
<rect x="-2" y="23" width="19" height="41" fill="#f2f2f2"/>
<rect x="-2" y="25" width="16.5" height="37" fill="#3452a6"/>
<rect x="0" y="14" width="12" height="4" fill="#6a8aa8"/>
<path d="M27 72 C20 60 22 36 30 24 C40 10 70 8 84 22 C94 34 96 58 90 72 C86 76 80 74 78 70 L36 70 C32 76 28 76 27 72 Z" fill="#4a3222"/>
<ellipse cx="55" cy="52" rx="22" ry="30" fill="#d4ac98"/>
<path d="M36 30 C42 20 66 18 76 28 L70 24 C60 20 46 20 36 30 Z" fill="#4a3222"/>
<path d="M-2 118 L0 98 C8 88 24 82 36 78 L55 94 L74 78 C88 82 106 88 117 98 L117 118 Z" fill="#344474"/>
<path d="M36 78 L55 94 L74 78 L82 118 L30 118 Z" fill="#bde0b0"/>
<path d="M24 84 L14 116 L21 116 L32 82 Z" fill="#7a4a30"/>
</g>
<g fill="none" stroke="#4a4a4a" stroke-width="1.5" opacity=".75"><rect x="34" y="43" width="18" height="11" rx="3"/><rect x="57" y="43" width="18" height="11" rx="3"/><path d="M52 47 H57 M34 46 L30 45 M75 46 L80 44"/></g>
</g>
</svg>

<!-- Tamara -->
<svg class="abs" style="left:959px;top:-2px" width="132" height="131" viewBox="0 0 132 131">
<defs>
<clipPath id="clipT"><rect x="0" y="0" width="132" height="131" rx="12"/></clipPath>
<filter id="bl4" x="-10%" y="-10%" width="120%" height="120%"><feGaussianBlur stdDeviation="1.2"/></filter>
<linearGradient id="sky" x1="0" y1="0" x2="0" y2="1"><stop offset="0" stop-color="#ececee"/><stop offset="1" stop-color="#c8d0da"/></linearGradient>
<linearGradient id="grass" x1="0" y1="0" x2="0" y2="1"><stop offset="0" stop-color="#b4966c"/><stop offset=".5" stop-color="#a8a272"/><stop offset="1" stop-color="#bca070"/></linearGradient>
</defs>
<g clip-path="url(#clipT)"><g filter="url(#bl4)">
<rect x="-5" y="-5" width="142" height="85" fill="url(#sky)"/>
<rect x="-5" y="10" width="142" height="50" fill="#b0aca8" opacity=".25"/>
<g stroke="#8a8078" opacity=".65"><line x1="30.4" y1="10.0" x2="29.6" y2="76" stroke-width="1.4"/><line x1="83.1" y1="-0.6" x2="80.2" y2="76" stroke-width="1.6"/><line x1="33.3" y1="3.2" x2="36.2" y2="76" stroke-width="1.3"/><line x1="111.8" y1="8.5" x2="112.6" y2="76" stroke-width="1.0"/><line x1="84.3" y1="17.1" x2="84.5" y2="76" stroke-width="1.5"/><line x1="89.3" y1="-0.6" x2="90.9" y2="76" stroke-width="1.4"/><line x1="39.0" y1="-1.3" x2="41.2" y2="76" stroke-width="1.3"/><line x1="95.8" y1="17.3" x2="97.0" y2="76" stroke-width="1.7"/><line x1="51.7" y1="15.6" x2="51.4" y2="76" stroke-width="1.7"/><line x1="117.5" y1="0.1" x2="115.3" y2="76" stroke-width="1.0"/><line x1="129.3" y1="7.6" x2="130.1" y2="76" stroke-width="1.1"/><line x1="67.0" y1="6.5" x2="66.1" y2="76" stroke-width="1.4"/><line x1="77.5" y1="17.9" x2="78.6" y2="76" stroke-width="1.7"/><line x1="114.5" y1="19.8" x2="115.5" y2="76" stroke-width="1.0"/><line x1="115.0" y1="19.2" x2="117.5" y2="76" stroke-width="1.4"/><line x1="95.1" y1="2.6" x2="97.1" y2="76" stroke-width="1.4"/><line x1="36.8" y1="-0.6" x2="38.9" y2="76" stroke-width="1.8"/><line x1="10.0" y1="15.6" x2="9.5" y2="76" stroke-width="1.0"/><line x1="38.0" y1="14.9" x2="40.2" y2="76" stroke-width="0.8"/><line x1="81.6" y1="-1.0" x2="82.9" y2="76" stroke-width="1.1"/><line x1="117.8" y1="19.6" x2="117.8" y2="76" stroke-width="1.8"/><line x1="40.1" y1="-0.3" x2="40.7" y2="76" stroke-width="0.8"/><line x1="24.8" y1="7.0" x2="25.5" y2="76" stroke-width="1.0"/><line x1="3.8" y1="17.1" x2="2.7" y2="76" stroke-width="1.8"/><line x1="119.9" y1="6.3" x2="119.7" y2="76" stroke-width="1.3"/><line x1="85.6" y1="11.1" x2="85.9" y2="76" stroke-width="1.4"/></g>
<g stroke="#9a9088" opacity=".5"><line x1="124.2" y1="30.4" x2="123.1" y2="18.9" stroke-width=".7"/><line x1="31.4" y1="20.1" x2="39.0" y2="10.4" stroke-width=".7"/><line x1="72.4" y1="5.6" x2="71.0" y2="-4.6" stroke-width=".7"/><line x1="2.6" y1="35.8" x2="4.8" y2="30.2" stroke-width=".7"/><line x1="82.8" y1="28.3" x2="85.7" y2="20.1" stroke-width=".7"/><line x1="93.3" y1="41.9" x2="85.7" y2="36.4" stroke-width=".7"/><line x1="89.2" y1="53.2" x2="85.3" y2="44.1" stroke-width=".7"/><line x1="78.2" y1="21.0" x2="76.1" y2="13.2" stroke-width=".7"/><line x1="48.7" y1="34.8" x2="45.5" y2="26.4" stroke-width=".7"/><line x1="101.9" y1="6.3" x2="103.0" y2="-5.3" stroke-width=".7"/><line x1="40.9" y1="16.1" x2="45.8" y2="9.0" stroke-width=".7"/><line x1="24.7" y1="26.8" x2="27.9" y2="20.8" stroke-width=".7"/><line x1="42.5" y1="21.7" x2="47.8" y2="12.7" stroke-width=".7"/><line x1="112.9" y1="13.5" x2="110.3" y2="2.6" stroke-width=".7"/><line x1="116.8" y1="27.6" x2="112.4" y2="21.5" stroke-width=".7"/><line x1="69.9" y1="14.5" x2="74.8" y2="2.0" stroke-width=".7"/><line x1="24.2" y1="18.9" x2="29.1" y2="8.2" stroke-width=".7"/><line x1="106.4" y1="22.3" x2="100.5" y2="14.6" stroke-width=".7"/><line x1="104.8" y1="18.6" x2="102.3" y2="9.8" stroke-width=".7"/><line x1="55.4" y1="25.5" x2="62.1" y2="19.1" stroke-width=".7"/><line x1="0.6" y1="52.2" x2="6.7" y2="38.3" stroke-width=".7"/><line x1="57.3" y1="52.5" x2="64.2" y2="45.5" stroke-width=".7"/><line x1="98.4" y1="46.8" x2="101.0" y2="37.2" stroke-width=".7"/><line x1="38.2" y1="22.1" x2="33.8" y2="16.4" stroke-width=".7"/><line x1="77.7" y1="19.4" x2="82.7" y2="13.9" stroke-width=".7"/><line x1="119.3" y1="39.7" x2="126.1" y2="26.6" stroke-width=".7"/><line x1="118.8" y1="33.8" x2="111.0" y2="22.1" stroke-width=".7"/><line x1="22.7" y1="20.0" x2="25.3" y2="10.3" stroke-width=".7"/><line x1="54.6" y1="52.0" x2="56.4" y2="43.9" stroke-width=".7"/><line x1="33.3" y1="48.1" x2="33.0" y2="36.0" stroke-width=".7"/><line x1="46.4" y1="14.9" x2="47.0" y2="2.5" stroke-width=".7"/><line x1="22.6" y1="44.6" x2="29.4" y2="32.3" stroke-width=".7"/><line x1="108.7" y1="5.4" x2="110.8" y2="-7.4" stroke-width=".7"/><line x1="6.6" y1="18.6" x2="2.9" y2="8.8" stroke-width=".7"/><line x1="55.8" y1="28.6" x2="60.3" y2="23.6" stroke-width=".7"/><line x1="7.2" y1="11.3" x2="1.2" y2="5.7" stroke-width=".7"/><line x1="128.7" y1="47.7" x2="122.0" y2="38.2" stroke-width=".7"/><line x1="41.7" y1="20.7" x2="39.3" y2="9.9" stroke-width=".7"/><line x1="77.4" y1="23.0" x2="72.5" y2="15.1" stroke-width=".7"/><line x1="16.3" y1="32.8" x2="19.8" y2="24.4" stroke-width=".7"/></g>
<rect x="-5" y="55" width="142" height="8" fill="#9a8a80" opacity=".55"/>
<rect x="-5" y="63" width="142" height="11" fill="#d2d8dc"/>
<g stroke="#7a7068" opacity=".5" stroke-width="1.2"><path d="M5 55 V75 M18 56 V75 M30 55 V75 M44 56 V75 M84 56 V75 M98 55 V75 M112 56 V75 M124 55 V75"/></g>
<rect x="-5" y="75" width="142" height="60" fill="url(#grass)"/>
<ellipse cx="100" cy="105" rx="30" ry="12" fill="#98a060" opacity=".5"/>
<ellipse cx="30" cy="110" rx="25" ry="10" fill="#9aa268" opacity=".45"/>
<path d="M40 95 C36 72 42 48 56 46 C68 45 74 56 72 78 C72 88 74 96 70 100 L44 100 Z" fill="#5e2e22"/>
<path d="M64 80 C70 88 74 96 70 100 L62 96 Z" fill="#b06a3a" opacity=".7"/>
<ellipse cx="62" cy="65" rx="8" ry="12" fill="#dcac98"/>
<path d="M40 135 L40 102 C42 88 54 84 64 88 C72 92 77 112 78 135 Z" fill="#2e3660"/>
</g></g>
</svg>


<div class="abs" style="left:295px;top:119.5px;width:185px;height:24.5px;background:#212121;border-radius:4px"></div>
<div class="abs" style="left:585px;top:119.5px;width:108px;height:24.5px;background:#212121;border-radius:4px"></div>
<div class="abs" style="left:876px;top:118px;width:152px;height:26px;background:#222222;border-radius:4px"></div>
<svg class="abs" style="left:299px;top:122px" width="18" height="18" viewBox="0 0 18 18"><g fill="#e5323f"><rect x="4.7" y="1.5" width="6.6" height="10.5" rx="3.3"/><rect x="7" y="11" width="2" height="5"/><rect x="5" y="15.3" width="7" height="2.2" rx="1"/></g><path d="M1.2 16.8 L16.1 2.5" stroke="#3a0a0e" stroke-width="3.2"/><path d="M1.2 16.8 L16.1 2.5" stroke="#e39a9a" stroke-width="1.3"/></svg><svg class="abs" style="left:591px;top:122px" width="18" height="18" viewBox="0 0 18 18"><g fill="#e5323f"><rect x="4.7" y="1.5" width="6.6" height="10.5" rx="3.3"/><rect x="7" y="11" width="2" height="5"/><rect x="5" y="15.3" width="7" height="2.2" rx="1"/></g><path d="M1.2 16.8 L16.1 2.5" stroke="#3a0a0e" stroke-width="3.2"/><path d="M1.2 16.8 L16.1 2.5" stroke="#e39a9a" stroke-width="1.3"/></svg><svg class="abs" style="left:882px;top:122px" width="18" height="18" viewBox="0 0 18 18"><g fill="#e5323f"><rect x="4.7" y="1.5" width="6.6" height="10.5" rx="3.3"/><rect x="7" y="11" width="2" height="5"/><rect x="5" y="15.3" width="7" height="2.2" rx="1"/></g><path d="M1.2 16.8 L16.1 2.5" stroke="#3a0a0e" stroke-width="3.2"/><path d="M1.2 16.8 L16.1 2.5" stroke="#e39a9a" stroke-width="1.3"/></svg>
<div class="zl" style="left:321.5px;letter-spacing:.15px">Олександр Голиздра</div>
<div class="zl" style="left:613.5px;letter-spacing:.42px">Костянтин</div>
<div class="zl" style="left:906px;letter-spacing:-.19px">Tamara Kolesnyk</div>
<div style="position:absolute;left:0;top:49.4px;width:1466px;text-align:center;font-family:'Liberation Sans',sans-serif;font-size:24.9px;color:#fff;line-height:30px;-webkit-text-stroke:.3px #fff">Костянтин</div>
</div>

</body></html>
